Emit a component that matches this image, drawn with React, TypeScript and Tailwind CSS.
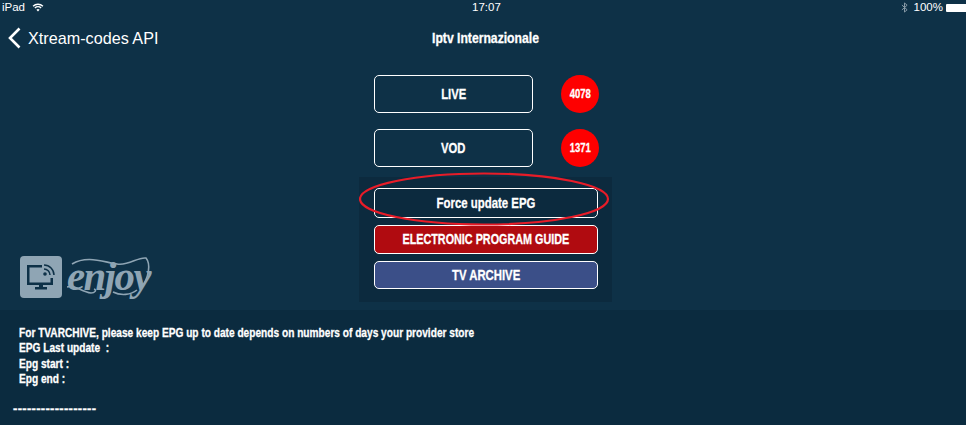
import React from "react";

const bold = "font-['Liberation_Sans',sans-serif] font-bold [-webkit-text-stroke:0.3px_white]";

const OutlineButton = ({ label, className, squeeze }: { label: string; className: string; squeeze: string }) => (
  <div className={`flex items-center justify-center rounded-[5px] border border-white text-[15px] text-white ${bold} ${className}`}>
    <span className={`inline-block whitespace-nowrap ${squeeze}`}>{label}</span>
  </div>
);

const Badge = ({ value }: { value: string }) => (
  <div className={`flex h-[38px] w-[38px] items-center justify-center rounded-full bg-[#fe0000] text-[12px] text-white ${bold}`}>
    <span className="inline-block scale-x-[0.79]">{value}</span>
  </div>
);

const InfoLine = ({ children }: { children: React.ReactNode }) => (
  <div className="origin-left scale-x-[0.78] whitespace-pre">{children}</div>
);

const WifiIcon = () => (
  <svg width="12" height="9" viewBox="0 0 14 11" fill="none" stroke="white" strokeWidth="1.7">
    <path d="M1 4 A8.5 8.5 0 0 1 13 4" />
    <path d="M3.2 6.2 A5.4 5.4 0 0 1 10.8 6.2" />
    <path d="M7 10.5 L5 8.3 A2.9 2.9 0 0 1 9 8.3 Z" fill="white" stroke="none" />
  </svg>
);

const BluetoothIcon = () => (
  <svg width="7" height="11" viewBox="0 0 8 12" fill="none" stroke="#8b9daa" strokeWidth="1.1">
    <path d="M1 3.2 L7 8.6 L4 11.2 V0.8 L7 3.4 L1 8.8" />
  </svg>
);

const TvLogo = () => (
  <svg width="42" height="42" viewBox="0 0 42 42">
    <rect width="42" height="42" rx="4" fill="#8fa5b4" />
    <path d="M7 9 H22 V11.5 H9.5 V26.5 H30.5 V22 H33 V29 H7 Z" fill="#0e3147" />
    <rect x="19" y="29" width="4" height="2" fill="#0e3147" />
    <rect x="15" y="31" width="12" height="2.5" fill="#0e3147" />
    <path d="M24 9 A10 10 0 0 1 34 19 M24 13 A6 6 0 0 1 30 19" fill="none" stroke="#0e3147" strokeWidth="1.5" />
    <circle cx="25" cy="18" r="1.8" fill="#0e3147" />
  </svg>
);

export default function App() {
  return (
    <div className="flex h-[425px] w-[966px] flex-col overflow-hidden bg-[#0e3147] font-['Liberation_Sans',sans-serif] text-white">
      {/* status bar */}
      <div className="relative flex h-[15px] items-center justify-between pl-[2px] text-[11.5px] leading-none">
        <div className="flex items-center gap-[7px]">
          <span>iPad</span>
          <WifiIcon />
        </div>
        <span className="absolute left-[472px] top-[2px]">17:07</span>
        <div className="flex items-center">
          <BluetoothIcon />
          <span className="ml-[6px]">100%</span>
          <div className="ml-[3px] h-[8px] w-[20px] rounded-l-[1px] bg-white" />
        </div>
      </div>

      {/* nav */}
      <div className="relative flex h-[46px] items-center pl-[8px]">
        <svg width="13" height="22" viewBox="0 0 13 22" fill="none" stroke="white" strokeWidth="2.6">
          <path d="M11.5 1.5 L2 11 L11.5 20.5" />
        </svg>
        <span className="ml-[7px] text-[16.2px]">Xtream-codes API</span>
        <span className={`absolute left-[432px] top-[15px] origin-left scale-x-[0.87] whitespace-nowrap text-[14px] leading-4 ${bold}`}>
          Iptv Internazionale
        </span>
      </div>

      {/* main */}
      <div className="relative flex flex-1 flex-col items-start pl-[374px] pt-[14px]">
        <div className="flex items-center gap-[28px]">
          <OutlineButton label="LIVE" squeeze="scale-x-[0.75]" className="h-[38px] w-[159px]" />
          <Badge value="4078" />
        </div>
        <div className="mt-[16px] flex items-center gap-[28px]">
          <OutlineButton label="VOD" squeeze="scale-x-[0.75]" className="h-[38px] w-[159px]" />
          <Badge value="1371" />
        </div>

        <div className="relative -ml-[15px] mt-[10px] flex h-[125px] w-[253px] flex-col gap-[7px] bg-[#0c2a3e] px-[15px] pt-[11px]">
          <OutlineButton label="Force update EPG" squeeze="scale-x-[0.76]" className="h-[30px] w-[224px]" />
          <OutlineButton label="ELECTRONIC PROGRAM GUIDE" squeeze="scale-x-[0.72]" className="h-[29px] w-[224px] bg-[#b00b10]" />
          <OutlineButton label="TV ARCHIVE" squeeze="scale-x-[0.755]" className="h-[28px] w-[224px] bg-[#3b4f88]" />

          <svg className="absolute left-0 top-[-5px]" width="252" height="54" viewBox="0 0 252 54" fill="none">
            <ellipse cx="125" cy="27" rx="124" ry="25.5" stroke="#e81c28" strokeWidth="2.2" />
          </svg>
        </div>

        {/* logo */}
        <div className="absolute left-[20px] top-[195px] flex items-center gap-[5px]">
          <TvLogo />
          <div className="relative h-[42px] w-[84px]">
            <span className="absolute left-0 top-[1px] origin-left scale-x-[1.02] font-['Liberation_Serif',serif] text-[40px] font-bold italic leading-none tracking-[-1.5px] text-[#8fa5b4]">
              enjoy
            </span>
            <svg className="absolute left-0 top-0" width="84" height="42" viewBox="0 0 84 42" fill="none" stroke="#8fa5b4" strokeWidth="1.6">
              <path d="M5 8 C20 -1 36 6 50 8 C62 10 70 1 79 2 C84 8 82 22 74 32" />
              <path d="M0 31 C8 28 14 36 24 37 C28 37 30 34 27 33" />
              <path d="M46 36 C54 40 64 39 70 34" />
            </svg>
          </div>
        </div>
      </div>

      {/* info */}
      <div className={`flex h-[115px] flex-col bg-[#0b2b3f] pl-[19px] pt-[15px] text-[13px] leading-[15.3px] ${bold}`}>
        <InfoLine>For TVARCHIVE, please keep EPG up to date depends on numbers of days your provider store</InfoLine>
        <InfoLine>EPG Last update  :</InfoLine>
        <InfoLine>Epg start :</InfoLine>
        <InfoLine>Epg end :</InfoLine>
        <div className="-ml-[6px] mt-[15px] tracking-[0.3px]">------------------</div>
      </div>
    </div>
  );
}
